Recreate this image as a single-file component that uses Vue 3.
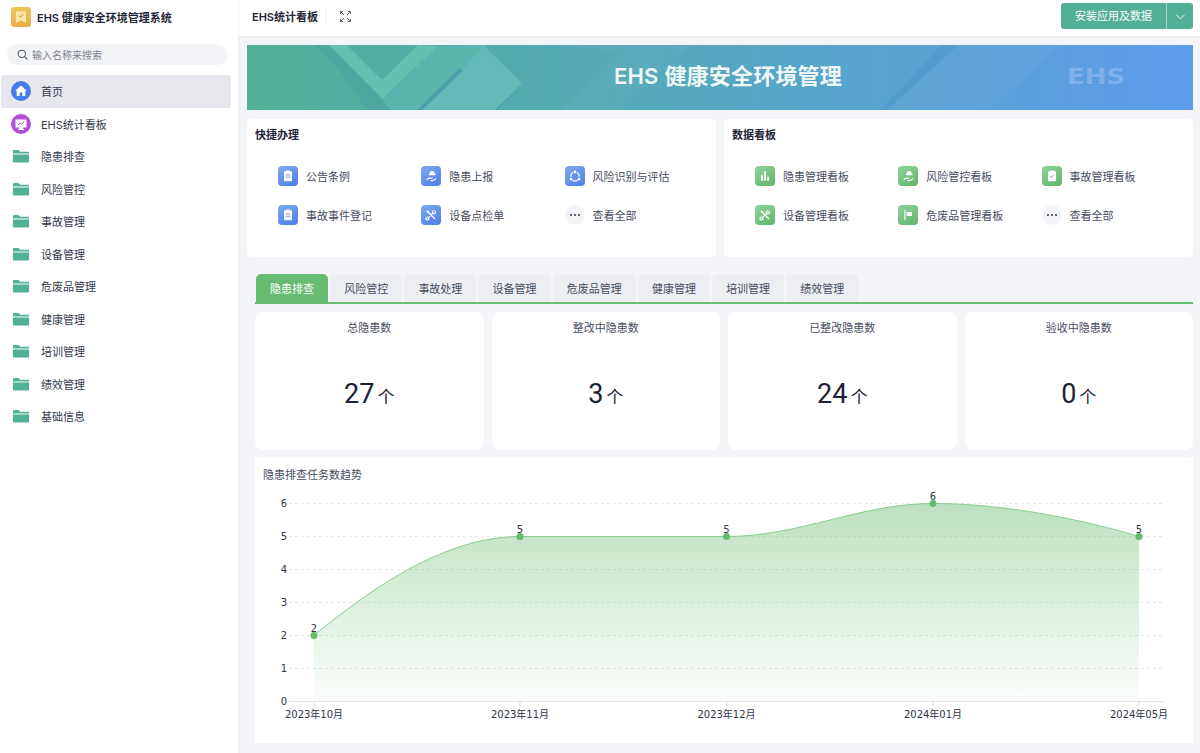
<script setup>
const navItems = [
  { name: '首页', icon: 'home', active: true },
  { name: 'EHS统计看板', icon: 'screen' },
  { name: '隐患排查' },
  { name: '风险管控' },
  { name: '事故管理' },
  { name: '设备管理' },
  { name: '危废品管理' },
  { name: '健康管理' },
  { name: '培训管理' },
  { name: '绩效管理' },
  { name: '基础信息' },
]

const panels = [
  {
    title: '快捷办理',
    tone: 'blue',
    items: [
      { name: '公告条例', icon: 'clipboard' },
      { name: '隐患上报', icon: 'hand' },
      { name: '风险识别与评估', icon: 'cycle' },
      { name: '事故事件登记', icon: 'clipboard' },
      { name: '设备点检单', icon: 'tools' },
      { name: '查看全部', icon: 'more' },
    ],
  },
  {
    title: '数据看板',
    tone: 'green',
    items: [
      { name: '隐患管理看板', icon: 'bars' },
      { name: '风险管控看板', icon: 'hand' },
      { name: '事故管理看板', icon: 'check' },
      { name: '设备管理看板', icon: 'tools' },
      { name: '危废品管理看板', icon: 'flag' },
      { name: '查看全部', icon: 'more' },
    ],
  },
]

const icons = {
  clipboard: { fill: 'M7.500 5H9V3.800h6V5h1.500A1.500 1.500 0 0 1 18 6.500v12a1.500 1.500 0 0 1-1.500 1.500h-9A1.500 1.500 0 0 1 6 18.500v-12A1.500 1.500 0 0 1 7.500 5zM9 9.800v1.500h6V9.800zM9 13.300v1.500h6v-1.500z' },
  check: { fill: 'M7.500 5H9V3.800h6V5h1.500A1.500 1.500 0 0 1 18 6.500v12a1.500 1.500 0 0 1-1.500 1.500h-9A1.500 1.500 0 0 1 6 18.500v-12A1.500 1.500 0 0 1 7.500 5zM8.800 12.500l2.300 2.500 4.200-4.500-1-.9-3.200 3.400-1.300-1.400z' },
  hand: {
    fill: 'M13.500 4.500c2.400 0 4.200 1.900 4.400 4.300h1.100v1.900H9V8.800h.6c.2-2.400 1.700-4.300 3.900-4.300z',
    line: 'M5.500 18c1.800-2.800 3.800-3.400 5.800-2.600h3.400M11 18.800h3.200c2 0 3.600-1 5.300-3.100',
  },
  cycle: { line: 'M9.200 6.800a6.500 6.500 0 0 0-3.400 6.400M8 18a6.500 6.500 0 0 0 8 0M18.200 13.200a6.500 6.500 0 0 0-3.400-6.400', fill: 'M12 3.800a2 2 0 1 1 0 4 2 2 0 0 1 0-4zM6 14.800a2 2 0 1 1 0 4 2 2 0 0 1 0-4zM18 14.800a2 2 0 1 1 0 4 2 2 0 0 1 0-4z' },
  tools: {
    line: 'M7.500 7.500l10.500 10.500M15 9L9.200 14.800M8.800 17.300a2.200 2.200 0 1 1-2.200-2.300 2.200 2.200 0 0 1 2.200 2.300zM18.800 6.500a2.800 2.800 0 0 1-3.800 3.300M14.500 9.500a2.800 2.800 0 0 1 2.800-4',
    fill: 'M5 6.300L6.300 5l3 2.300-2 2z',
  },
  bars: { fill: 'M6 11h2.800v8H6zM10.600 5h2.800v14h-2.800zM15.200 13H18v6h-2.800z' },
  flag: { fill: 'M6.500 4.500h1.800v15H6.500zM10 7.500h8v6h-8z' },
}

const tabs = ['隐患排查', '风险管控', '事故处理', '设备管理', '危废品管理', '健康管理', '培训管理', '绩效管理']

const stats = [
  { label: '总隐患数', value: 27 },
  { label: '整改中隐患数', value: 3 },
  { label: '已整改隐患数', value: 24 },
  { label: '验收中隐患数', value: 0 },
]

// 图表坐标沿用页面坐标，svg 的 viewBox 与卡片位置对齐
const yTicks = [0, 1, 2, 3, 4, 5, 6]
const yOf = (v) => 701.5 - v * 33
const points = [
  { x: 314, v: 2, label: '2023年10月' },
  { x: 520, v: 5, label: '2023年11月' },
  { x: 726.5, v: 5, label: '2023年12月' },
  { x: 933, v: 6, label: '2024年01月' },
  { x: 1139, v: 5, label: '2024年05月' },
]
const linePath = 'M314 635C345 612 430 536.500 520 536.500C623 536.500 623 536.500 726.500 536.500C800 536.500 860 503.500 933 503.500C1036 503.500 1139 536.500 1139 536.500'
const areaPath = linePath + 'L1139 701.500L314 701.500Z'
</script>

<template>
  <div class="app">
    <aside class="sidebar">
      <div class="brand">
        <span class="logo">
          <svg viewBox="0 0 20 20" width="20" height="20">
            <path d="M5 4.500h10v11.500L10 13.500 5 16z" fill="#f9e3ae" />
            <path d="M7.500 8.300l1.900 1.900 3.100-3.100" fill="none" stroke="#e8a93f" stroke-width="1.100" />
          </svg>
        </span>
        <span class="brand-name">EHS 健康安全环境管理系统</span>
      </div>
      <div class="search">
        <svg viewBox="0 0 24 24" width="11" height="11" fill="none" stroke="#4b5263" stroke-width="2.200">
          <circle cx="10.500" cy="10.500" r="8" />
          <path d="M16.500 16.500l6 6" />
        </svg>
        <span>输入名称来搜索</span>
      </div>
      <nav class="nav">
        <div v-for="item in navItems" :key="item.name" class="nav-item" :class="{ active: item.active }">
          <span v-if="item.icon === 'home'" class="nav-round home">
            <svg viewBox="0 0 20 20" width="20" height="20">
              <path d="M10 4.500l5.800 5.300h-1.500v5.200h-3v-3.500H8.700V15h-3V9.800H4.200z" fill="#fff" />
            </svg>
          </span>
          <span v-else-if="item.icon === 'screen'" class="nav-round screen">
            <svg viewBox="0 0 20 20" width="20" height="20">
              <path d="M4.500 5.500h11v8h-3.700v1.300h1.200V16H7v-1.200h1.200v-1.300H4.500z" fill="#fff" />
              <path d="M7 11l2.200-2 1.600 1 2.400-2.200" fill="none" stroke="#b34fd4" stroke-width="1" />
            </svg>
          </span>
          <svg v-else class="folder" viewBox="0 0 20 16" width="18" height="14.400">
            <path d="M1 2.500A1.500 1.500 0 0 1 2.500 1h4.700l2 2H18a1 1 0 0 1 1 1v1H1z" fill="#52b096" />
            <path d="M1 6h18v7.500a1.500 1.500 0 0 1-1.500 1.500h-15A1.500 1.500 0 0 1 1 13.500z" fill="#52b096" />
          </svg>
          <span class="nav-name">{{ item.name }}</span>
        </div>
      </nav>
    </aside>

    <div class="main">
      <header class="topbar">
        <span class="page-title">EHS统计看板</span>
        <span class="divider"></span>
        <svg class="expand" viewBox="0 0 11 11" width="11" height="11" fill="none" stroke="#5a6070" stroke-width="1">
          <path d="M.5 3V.5H3M8 .5h2.500V3M10.500 8v2.500H8M3 10.500H.5V8M1 1l3 3M10 1L7 4M10 10L7 7M1 10l3-3" />
        </svg>
        <div class="split-btn">
          <span class="btn-main">安装应用及数据</span>
          <span class="btn-more">
            <svg viewBox="0 0 12 12" width="11" height="11" fill="none" stroke="#fff" stroke-width="1">
              <path d="M1.500 4l4.500 4.500L10.500 4" />
            </svg>
          </span>
        </div>
      </header>

      <div class="content">
        <div class="banner">
          <svg class="banner-art" viewBox="247 45 946 65" width="946" height="65">
            <polygon points="382,99 438,46 483,45 462,70 423,110 390,110" fill="#5ab4ae" />
            <polygon points="329,45 347,45 382,80 418,45 438,46 382,99" fill="#66c0b0" />
            <polygon points="315,45 329,45 382,99 390,110 367,110 336,65" fill="#4ea7a0" />
            <polygon points="483,45 522,83 495,110 423,110 462,70" fill="#62b9b6" />
            <polygon points="460,68 463,71 422,110 417,110" fill="#4b9fad" />
            <polygon points="520,87 497,110 495,110" fill="#4b9fb0" />
            <polygon points="560,45 617,52 560,110 620,110 690,45" fill="#ffffff" opacity="0.03" />
            <polygon points="942,45 958,45 887,110 880,110" fill="#4f9bd0" opacity="0.8" />
            <polygon points="958,45 1060,45 990,110 887,110" fill="#ffffff" opacity="0.03" />
          </svg>
          <span class="banner-title">EHS 健康安全环境管理</span>
          <span class="banner-mark">EHS</span>
        </div>

        <div class="panels">
          <section v-for="panel in panels" :key="panel.title" class="panel">
            <h3>{{ panel.title }}</h3>
            <div class="entry-grid">
              <div v-for="item in panel.items" :key="item.name" class="entry">
                <span v-if="item.icon === 'more'" class="entry-icon more">
                  <i></i><i></i><i></i>
                </span>
                <span v-else class="entry-icon" :class="panel.tone">
                  <svg viewBox="0 0 24 24" width="16" height="16">
                    <path v-if="icons[item.icon].fill" :d="icons[item.icon].fill" fill="#fff" fill-rule="evenodd" />
                    <path v-if="icons[item.icon].line" :d="icons[item.icon].line" fill="none" stroke="#fff" stroke-width="1.800" />
                  </svg>
                </span>
                <span class="entry-name">{{ item.name }}</span>
              </div>
            </div>
          </section>
        </div>

        <div class="board">
          <div class="tabs">
            <span v-for="(tab, i) in tabs" :key="tab" class="tab" :class="{ active: i === 0 }">{{ tab }}</span>
          </div>

          <div class="stats">
            <div v-for="stat in stats" :key="stat.label" class="stat">
              <div class="stat-label">{{ stat.label }}</div>
              <div class="stat-value">{{ stat.value }}<small>个</small></div>
            </div>
          </div>

          <div class="chart-card">
            <div class="chart-title">隐患排查任务数趋势</div>
            <svg class="chart" viewBox="255 488 938 255" width="938" height="255">
              <defs>
                <linearGradient id="area" x1="0" y1="0" x2="0" y2="1">
                  <stop offset="0" stop-color="#68bc71" stop-opacity="0.45" />
                  <stop offset="1" stop-color="#68bc71" stop-opacity="0.02" />
                </linearGradient>
              </defs>
              <g v-for="t in yTicks" :key="t">
                <line v-if="t > 0" x1="289" x2="1164" :y1="yOf(t)" :y2="yOf(t)" stroke="#e4e7ec" stroke-dasharray="3 3" />
                <text x="287" :y="yOf(t) + 3.500" text-anchor="end" class="axis-text">{{ t }}</text>
              </g>
              <line x1="289" x2="1164" y1="701.500" y2="701.500" stroke="#dfe2e8" />
              <path :d="areaPath" fill="url(#area)" />
              <path :d="linePath" fill="none" stroke="#86cf8e" stroke-width="1" />
              <g v-for="p in points" :key="p.label">
                <line :x1="p.x" :x2="p.x" y1="701.500" y2="706" stroke="#d5d8de" />
                <circle :cx="p.x" :cy="yOf(p.v)" r="3.500" fill="#63bb6d" />
                <text :x="p.x" :y="yOf(p.v) - 3.500" text-anchor="middle" class="axis-text">{{ p.v }}</text>
                <text :x="p.x" y="718" text-anchor="middle" class="axis-text">{{ p.label }}</text>
              </g>
            </svg>
          </div>
        </div>
      </div>
    </div>
  </div>
</template>

<style>
body {
  margin: 0;
  background: #f3f5f9;
}
</style>

<style scoped>
.app {
  display: flex;
  height: 753px;
  overflow: hidden;
  font-family: Inter, "Noto Sans CJK SC", sans-serif;
  font-size: 11px;
  color: #333a4c;
}

.sidebar {
  flex: none;
  box-sizing: border-box;
  width: 238px;
  background: #fff;
  padding: 0 7px 0 1px;
  box-shadow: 1px 0 2px rgba(30, 40, 70, 0.06);
  z-index: 2;
}

.brand {
  display: flex;
  align-items: center;
  gap: 6px;
  height: 33px;
  padding-left: 10px;
}

.logo {
  width: 20px;
  height: 20px;
  border-radius: 3px;
  background: linear-gradient(160deg, #f2c65f, #e9a945);
}

.logo svg {
  display: block;
}

.brand-name {
  font-weight: 600;
  color: #1f2638;
}

.search {
  display: flex;
  align-items: center;
  gap: 4px;
  height: 21px;
  margin: 11px 3px 10px 6px;
  padding-left: 10px;
  border-radius: 11px;
  background: #f3f4f7;
  font-size: 10px;
  color: #7d8391;
}

.nav-item {
  display: flex;
  align-items: center;
  height: 32.5px;
  padding-left: 10px;
  border-radius: 3px;
}

.nav-item.active {
  background: #e6e8ee;
}

.nav-round {
  width: 20px;
  height: 20px;
  border-radius: 50%;
}

.nav-round svg {
  display: block;
}

.home {
  background: #477de8;
}

.screen {
  background: #b34fd4;
}

.folder {
  margin: 0 1px;
}

.nav-name {
  margin-left: 10px;
}

.main {
  flex: 1;
  min-width: 0;
}

.topbar {
  display: flex;
  align-items: center;
  box-sizing: border-box;
  height: 36px;
  padding: 0 7px 4px 14px;
  background: #fff;
  box-shadow: 0 1px 2px rgba(30, 40, 70, 0.06);
}

.page-title {
  font-weight: 600;
  color: #1f2638;
}

.divider {
  width: 1px;
  height: 16px;
  margin: 0 14px 0 7px;
  background: #eceef2;
}

.expand {
  flex: none;
}

.split-btn {
  display: flex;
  height: 26px;
  margin-left: auto;
  border-radius: 3px;
  overflow: hidden;
  background: #52b096;
  color: #fff;
  line-height: 26px;
}

.btn-main {
  width: 105px;
  text-align: center;
}

.btn-more {
  display: flex;
  align-items: center;
  justify-content: center;
  width: 26px;
  border-left: 1px solid #a5d6c7;
}

.content {
  padding: 9px 7px 0 9px;
}

.banner {
  position: relative;
  display: flex;
  align-items: center;
  justify-content: center;
  height: 65px;
  padding: 0 0 8px 16px;
  box-sizing: border-box;
  overflow: hidden;
  background: linear-gradient(90deg, #52b096 0%, #55a8bd 45%, #5d9cec 100%);
}

.banner-art {
  position: absolute;
  left: 0;
  top: 0;
}

.banner-title {
  position: relative;
  font-size: 22px;
  font-weight: 600;
  letter-spacing: 0.2px;
  color: #eef7f5;
}

.banner-mark {
  position: absolute;
  left: 820px;
  top: 20px;
  font-family: "DejaVu Sans", sans-serif;
  font-size: 21px;
  line-height: 24px;
  font-weight: 700;
  color: #7eb1ec;
  text-shadow: 1px 1px 1px #5c98dd;
  transform: scaleX(1.24);
  transform-origin: left center;
}

.panels {
  display: grid;
  grid-template-columns: 1fr 1fr;
  gap: 8px;
  margin-top: 9px;
}

.panel {
  box-sizing: border-box;
  height: 138px;
  padding: 9px 8px;
  border-radius: 5px;
  background: #fff;
}

.panel h3 {
  margin: 0;
  font-size: 11px;
  line-height: 14px;
  font-weight: 600;
  color: #1f2638;
}

.entry-grid {
  display: grid;
  grid-template-columns: repeat(3, 143.3px);
  row-gap: 19px;
  margin-top: 24px;
  padding-left: 23px;
}

.entry {
  display: flex;
  align-items: center;
  gap: 8px;
  height: 20px;
}

.entry-icon {
  display: flex;
  align-items: center;
  justify-content: center;
  width: 20px;
  height: 20px;
  border-radius: 4px;
}

.entry-icon.blue {
  background: linear-gradient(150deg, #82a9ef, #4a7ee6);
}

.entry-icon.green {
  background: linear-gradient(150deg, #92d29b, #5fb56b);
}

.entry-icon.more {
  gap: 2px;
  border-radius: 50%;
  background: #f3f4f7;
}

.entry-icon.more i {
  width: 2px;
  height: 2px;
  border-radius: 50%;
  background: #2d3344;
}

.entry-name {
  color: #474d5d;
}

.board {
  padding: 0 0 0 8px;
  margin-top: 17px;
}

.tabs {
  display: flex;
  gap: 2.2px;
  padding-left: 1px;
  border-bottom: 2px solid #68bc71;
}

.tab {
  padding: 0 14px;
  height: 28px;
  line-height: 31px;
  border-radius: 5px 5px 0 0;
  background: #eceef2;
  color: #474d5d;
}

.tab.active {
  background: #68bc71;
  color: #fff;
}

.stats {
  display: grid;
  grid-template-columns: repeat(4, 1fr);
  gap: 8px;
  margin-top: 8px;
}

.stat {
  display: flex;
  flex-direction: column;
  align-items: center;
  box-sizing: border-box;
  height: 138px;
  padding-top: 9px;
  border-radius: 8px;
  background: #fff;
}

.stat-label {
  line-height: 14px;
  color: #474d5d;
}

.stat-value {
  margin-top: 39px;
  font-family: Roboto, "Noto Sans CJK SC", sans-serif;
  font-size: 27px;
  line-height: 40px;
  color: #1b2236;
}

.stat-value small {
  margin-left: 3px;
  font-size: 17px;
  font-family: "Noto Sans CJK SC", sans-serif;
}

.chart-card {
  height: 285px;
  margin-top: 8px;
  background: #fff;
}

.chart-title {
  height: 30px;
  padding-left: 8px;
  line-height: 35px;
  color: #474d5d;
}

.chart {
  display: block;
}

.axis-text {
  font-family: "DejaVu Sans", "Noto Sans CJK SC", sans-serif;
  font-size: 10px;
  fill: #2f3648;
}
</style>
